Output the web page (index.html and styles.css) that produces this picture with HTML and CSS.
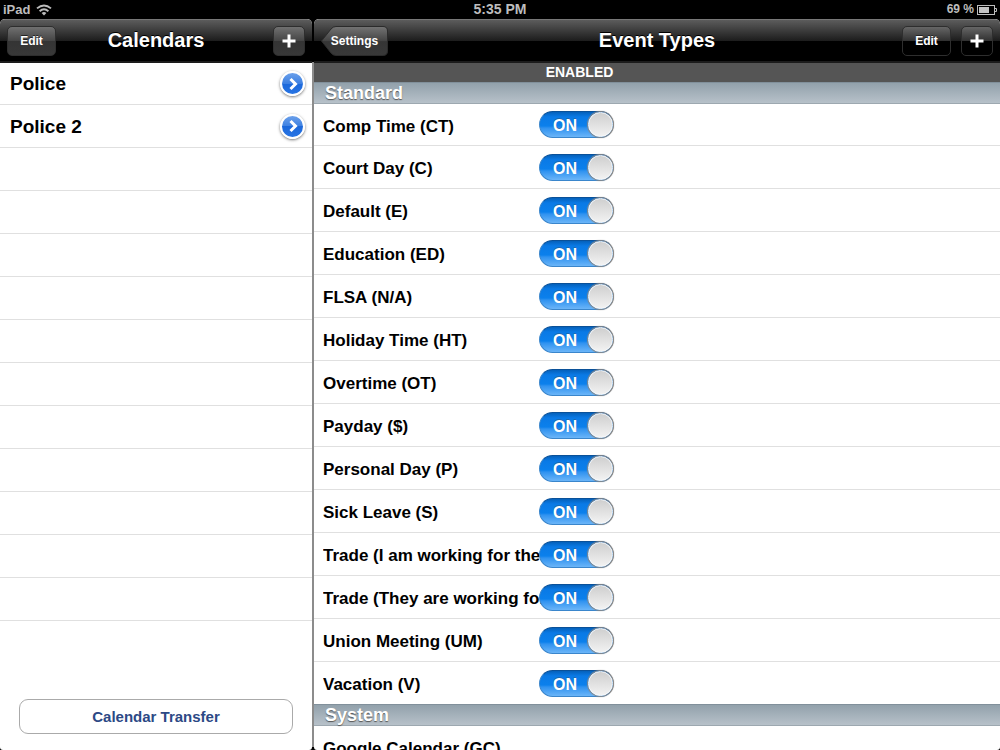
FILE: index.html
```html
<!DOCTYPE html>
<html lang="en">
<head>
<meta charset="utf-8">
<meta name="viewport" content="width=device-width, initial-scale=1">
<title>Event Types</title>
<link rel="stylesheet" href="styles.css">
</head>
<body>
<div class="screen">
  <header class="status">
    <div class="status-left">
      <span>iPad</span>
      <svg viewBox="0 0 16 12" width="16" height="12" aria-hidden="true">
        <path d="M1 4.4Q8-1.6 15 4.4M3.6 7.2Q8 3.2 12.4 7.2" fill="none" stroke="#bdbdbd" stroke-width="1.9"/>
        <path d="M5.6 9Q8 6.8 10.4 9L8 11.6Z" fill="#bdbdbd"/>
      </svg>
    </div>
    <span class="clock">5:35 PM</span>
    <div class="status-right">
      <span class="charge">69 %</span>
      <svg viewBox="0 0 20 10" width="20" height="10" aria-hidden="true">
        <rect x=".5" y=".5" width="17" height="9" fill="none" stroke="#bdbdbd"/>
        <rect x="2" y="2" width="10" height="6" fill="#c4c4c4"/>
        <path d="M18 3.5h1.5v3H18" fill="none" stroke="#bdbdbd"/>
      </svg>
    </div>
  </header>

  <div class="panes">
    <section class="pane sidebar">
      <div class="navbar">
        <button class="bar-button" type="button">Edit</button>
        <h1 class="nav-title">Calendars</h1>
        <button class="bar-button bar-button-add" type="button" aria-label="Add calendar">
          <svg viewBox="0 0 14 14" width="14" height="14" aria-hidden="true"><path d="M7 0.500v13M0.500 7h13" stroke="#fff" stroke-width="3"/></svg>
        </button>
      </div>
      <ul class="calendar-list">
        <li class="calendar-row"><span>Police</span>
          <button class="disclosure" type="button" aria-label="Police details"><svg viewBox="0 0 16 16" width="16" height="16" aria-hidden="true"><path d="M5.500 3l5 5-5 5" fill="none" stroke="#fff" stroke-width="3"/></svg></button></li>
        <li class="calendar-row"><span>Police 2</span>
          <button class="disclosure" type="button" aria-label="Police 2 details"><svg viewBox="0 0 16 16" width="16" height="16" aria-hidden="true"><path d="M5.500 3l5 5-5 5" fill="none" stroke="#fff" stroke-width="3"/></svg></button></li>
        <li class="calendar-row"></li><li class="calendar-row"></li><li class="calendar-row"></li>
        <li class="calendar-row"></li><li class="calendar-row"></li><li class="calendar-row"></li>
        <li class="calendar-row"></li><li class="calendar-row"></li><li class="calendar-row"></li>
        <li class="calendar-row"></li><li class="calendar-row"></li>
      </ul>
      <div class="sidebar-footer"><button class="transfer" type="button">Calendar Transfer</button></div>
    </section>

    <section class="pane detail">
      <div class="navbar">
        <button class="back-button" type="button">
          <svg class="back-shape" viewBox="0 0 67 30" width="67" height="30" aria-hidden="true">
            <defs><linearGradient id="back" x2="0" y2="1"><stop offset="0" stop-color="#747474"/><stop offset=".5" stop-color="#444"/><stop offset=".52" stop-color="#353535"/><stop offset="1" stop-color="#393939"/></linearGradient></defs>
            <path d="M.5 15L10 3Q12 .5 15 .5H62Q66.500 .5 66.500 5V25Q66.500 29.500 62 29.500H15Q12 29.500 10 27Z" fill="url(#back)" stroke="#2b2b2b"/>
          </svg>
          <span class="back-text">Settings</span>
        </button>
        <h2 class="nav-title">Event Types</h2>
        <div class="nav-actions">
          <button class="bar-button bar-button-dark" type="button">Edit</button>
          <button class="bar-button bar-button-add bar-button-dark" type="button" aria-label="Add event type">
            <svg viewBox="0 0 14 14" width="14" height="14" aria-hidden="true"><path d="M7 0.500v13M0.500 7h13" stroke="#fff" stroke-width="3"/></svg>
          </button>
        </div>
      </div>
      <div class="column-bar"><span class="column-label">ENABLED</span></div>
      <h3 class="group-title">Standard</h3>
      <ul class="event-list">
        <li class="event-row"><label class="event-name" for="ct">Comp Time (CT)</label><span class="switch"><input class="switch-input" id="ct" type="checkbox" checked><span class="switch-text">ON</span></span></li>
        <li class="event-row"><label class="event-name" for="c">Court Day (C)</label><span class="switch"><input class="switch-input" id="c" type="checkbox" checked><span class="switch-text">ON</span></span></li>
        <li class="event-row"><label class="event-name" for="e">Default (E)</label><span class="switch"><input class="switch-input" id="e" type="checkbox" checked><span class="switch-text">ON</span></span></li>
        <li class="event-row"><label class="event-name" for="ed">Education (ED)</label><span class="switch"><input class="switch-input" id="ed" type="checkbox" checked><span class="switch-text">ON</span></span></li>
        <li class="event-row"><label class="event-name" for="na">FLSA (N/A)</label><span class="switch"><input class="switch-input" id="na" type="checkbox" checked><span class="switch-text">ON</span></span></li>
        <li class="event-row"><label class="event-name" for="ht">Holiday Time (HT)</label><span class="switch"><input class="switch-input" id="ht" type="checkbox" checked><span class="switch-text">ON</span></span></li>
        <li class="event-row"><label class="event-name" for="ot">Overtime (OT)</label><span class="switch"><input class="switch-input" id="ot" type="checkbox" checked><span class="switch-text">ON</span></span></li>
        <li class="event-row"><label class="event-name" for="pay">Payday ($)</label><span class="switch"><input class="switch-input" id="pay" type="checkbox" checked><span class="switch-text">ON</span></span></li>
        <li class="event-row"><label class="event-name" for="p">Personal Day (P)</label><span class="switch"><input class="switch-input" id="p" type="checkbox" checked><span class="switch-text">ON</span></span></li>
        <li class="event-row"><label class="event-name" for="s">Sick Leave (S)</label><span class="switch"><input class="switch-input" id="s" type="checkbox" checked><span class="switch-text">ON</span></span></li>
        <li class="event-row"><label class="event-name" for="t1">Trade (I am working for them)</label><span class="switch"><input class="switch-input" id="t1" type="checkbox" checked><span class="switch-text">ON</span></span></li>
        <li class="event-row"><label class="event-name" for="t2">Trade (They are working for me)</label><span class="switch"><input class="switch-input" id="t2" type="checkbox" checked><span class="switch-text">ON</span></span></li>
        <li class="event-row"><label class="event-name" for="um">Union Meeting (UM)</label><span class="switch"><input class="switch-input" id="um" type="checkbox" checked><span class="switch-text">ON</span></span></li>
        <li class="event-row"><label class="event-name" for="v">Vacation (V)</label><span class="switch"><input class="switch-input" id="v" type="checkbox" checked><span class="switch-text">ON</span></span></li>
      </ul>
      <h3 class="group-title">System</h3>
      <ul class="event-list">
        <li class="event-row"><span class="event-name">Google Calendar (GC)</span></li>
      </ul>
    </section>
  </div>
</div>
</body>
</html>
```
FILE: styles.css
```css
*, *::after { box-sizing: border-box; }

body {
  margin: 0;
  background: #000;
  font-family: "Liberation Sans", Arial, sans-serif;
  font-weight: bold;
  color: #000;
}

button { font: inherit; cursor: pointer; }
ul { list-style: none; margin: 0; padding: 0; }
h1, h2, h3 { margin: 0; }

.screen {
  height: 100vh;
  display: flex;
  flex-direction: column;
  overflow: hidden;
}

/* Status bar */
.status {
  display: grid;
  grid-template-columns: 1fr auto 1fr;
  align-items: center;
  height: 19px;
  padding: 0 3px;
  color: #bdbdbd;
  font-size: 14px;
  line-height: 19px;
}
.status-left { display: flex; align-items: center; gap: 6px; font-size: 13px; }
.status-right { display: flex; align-items: center; justify-content: flex-end; gap: 3px; }
.charge { font-size: 12px; }

/* Panes */
.panes {
  flex: 1;
  min-height: 0;
  display: grid;
  grid-template-columns: 312px 1fr;
  gap: 2px;
  background: linear-gradient(#000 43px, #8c8c8c 43px, #8c8c8c calc(100% - 3px), #000 calc(100% - 3px));
}
.pane {
  min-width: 0;
  display: flex;
  flex-direction: column;
  overflow: hidden;
  background: #fff;
  border-radius: 5px 5px 3px 3px;
}

.navbar {
  position: relative;
  flex: none;
  display: flex;
  align-items: center;
  justify-content: space-between;
  height: 44px;
  padding: 0 7px;
  border-top: 1px solid #777;
  border-bottom: 2px solid #1c1c1c;
  background: linear-gradient(#5c5c5c, #1c1c1c 21px, #000 21px);
}
.nav-title {
  position: absolute;
  inset: 0;
  color: #fff;
  font-size: 20px;
  line-height: 40px;
  text-align: center;
  text-shadow: 0 -1px 0 #000;
  pointer-events: none;
}
.nav-actions { display: flex; gap: 10px; }

.bar-button {
  display: flex;
  align-items: center;
  justify-content: center;
  height: 30px;
  width: 49px;
  padding: 0;
  border: 1px solid #2e2e2e;
  border-radius: 5px;
  background: linear-gradient(#707070, #444 14px, #343434 14px, #383838);
  color: #fff;
  font-size: 12px;
  text-shadow: 0 -1px 0 #222;
}
.bar-button-add { width: 32px; }
.bar-button-dark { background: linear-gradient(#666, #303030 14px, #000 14px); }

.back-button {
  position: relative;
  width: 67px;
  height: 30px;
  padding: 0;
  border: 0;
  background: none;
  color: #fff;
  font-size: 12px;
}
.back-shape { position: absolute; inset: 0; }
.back-text { position: relative; }

/* Calendar list */
.calendar-row {
  display: flex;
  align-items: center;
  justify-content: space-between;
  height: 43px;
  padding: 0 7px 0 10px;
  border-bottom: 1px solid #e0e0e0;
  font-size: 19px;
}
.calendar-row:first-child { height: 42px; }
.calendar-row span { padding-top: 1px; }
.disclosure {
  display: grid;
  place-items: center;
  width: 25px;
  height: 25px;
  padding: 0;
  border: 2px solid #fff;
  border-radius: 50%;
  background: linear-gradient(#6ba0ea, #3d80e2 50%, #1c68da 50%, #2774e4);
  box-shadow: 0 1px 3px #777;
}
.sidebar-footer { margin-top: auto; padding: 0 19px 16px; }
.transfer {
  width: 100%;
  height: 35px;
  border: 1px solid #aaa;
  border-radius: 9px;
  background: #fff;
  color: #2c4985;
  font-size: 15px;
}

/* Event types */
.column-bar {
  flex: none;
  height: 19px;
  padding-left: 225px;
  background: #555;
  color: #fff;
  font-size: 14px;
  line-height: 19px;
}
.column-label { display: block; width: 81px; text-align: center; }

.group-title {
  flex: none;
  height: 22px;
  padding-left: 11px;
  border-top: 1px solid #81909b;
  border-bottom: 1px solid #9da8b0;
  background: linear-gradient(#92a1ab, #b7c1c9);
  color: #fff;
  font-size: 18px;
  line-height: 20px;
  text-shadow: 0 1px 1px #555;
}
.event-list { flex: none; }
.event-row {
  display: grid;
  grid-template-columns: 216px 75px;
  align-items: center;
  height: 43px;
  padding-left: 9px;
  border-bottom: 1px solid #e0e0e0;
}
.event-row:first-child { height: 42px; }
.event-row:last-child { height: 42px; border-bottom: 0; }
.event-name {
  overflow: hidden;
  margin-right: -4px;
  padding-top: 4px;
  font-size: 17px;
  line-height: 22px;
  white-space: nowrap;
}
.switch { position: relative; height: 27px; }
.switch-input {
  appearance: none;
  position: relative;
  display: block;
  width: 75px;
  height: 27px;
  margin: 0;
  border: 1px solid #3a86cc;
  border-top-color: #0a5199;
  border-right-color: #888;
  border-radius: 14px;
  background: linear-gradient(#0561bb, #0a7ae6 5px, #0b80ec 14px, #2f92f0 16px, #6bb5f8);
  cursor: pointer;
}
.switch-input::after {
  content: "";
  position: absolute;
  top: 0;
  right: 0;
  width: 25px;
  height: 25px;
  border: 1px solid #fafafa;
  border-radius: 50%;
  background: linear-gradient(#cfcfcf, #f2f2f2);
  box-shadow: 0 0 1px 1px #888;
}
.switch-text {
  position: absolute;
  left: 14px;
  top: 0;
  color: #fff;
  font-size: 16px;
  line-height: 29px;
  text-shadow: 0 -1px 0 #2068ad;
  pointer-events: none;
}
```
